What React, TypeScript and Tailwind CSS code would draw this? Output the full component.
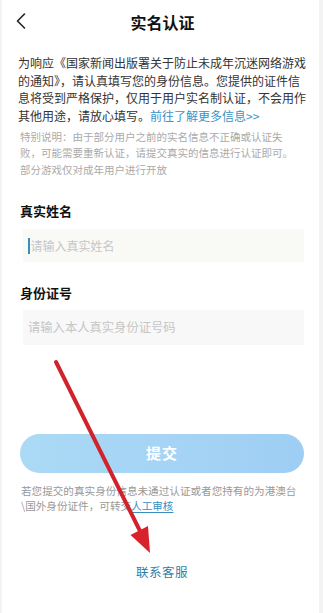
import React from "react";

export default function App() {
  const font = { fontFamily: '"Noto Sans CJK SC", "Noto Sans", sans-serif' };
  return (
    <div className="relative w-[323px] min-h-[613px] bg-[#f3f3f3] pl-[2px] pr-[4px]" style={font}>
      <div className="min-h-[613px] bg-white flex flex-col">
        {/* header */}
        <div className="relative h-[44px] flex items-center justify-center shrink-0">
          <svg className="absolute left-[13px] top-[12px]" width="12" height="18" viewBox="0 0 12 18" fill="none">
            <path d="M9.5 2 L2.5 9 L9.5 16" stroke="#222" strokeWidth="1.6" strokeLinecap="round" strokeLinejoin="round" />
          </svg>
          <div className="text-[16px] font-bold text-[#111] leading-[20px] ml-[4px]">实名认证</div>
        </div>

        {/* intro */}
        <div className="pl-[16px] pr-[10px] pt-[10px] text-[12px] leading-[17.5px] text-[#333]">
          为响应《国家新闻出版署关于防止未成年沉迷网络游戏的通知》，请认真填写您的身份信息。您提供的证件信息将受到严格保护，仅用于用户实名制认证，不会用作其他用途，请放心填写。
          <span className="text-[#3a93c6]">前往了解更多信息&gt;&gt;</span>
        </div>
        <div className="pl-[18px] mt-[4.5px] w-[298px] text-[10.5px] leading-[16.5px] text-[#aaaaaa]">
          特别说明：由于部分用户之前的实名信息不正确或认证失败，可能需要重新认证，请提交真实的信息进行认证即可。部分游戏仅对成年用户进行开放
        </div>

        {/* form */}
        <div className="pl-[18px] pr-[15px] flex flex-col">
          <div className="mt-[24px] text-[13px] font-bold leading-[18px] text-[#111]">真实姓名</div>
          <div className="mt-[9px] ml-[3px] h-[33px] bg-[#f9f9f6] flex items-center pl-[5px]">
            <span className="w-[1.5px] h-[16px] bg-[#3a8fb8] mr-[1px]" />
            <span className="text-[12px] text-[#c6c6c6]">请输入真实姓名</span>
          </div>

          <div className="mt-[22px] text-[13px] font-bold leading-[18px] text-[#111]">身份证号</div>
          <div className="mt-[8px] ml-[3px] h-[35px] bg-[#f8f8f8] flex items-center pl-[5px]">
            <span className="text-[12.3px] text-[#c6c6c6]">请输入本人真实身份证号码</span>
          </div>

          <button className="mt-[89px] h-[39px] rounded-full bg-gradient-to-r from-[#abdaf6] to-[#9fcef4] text-white text-[15px] font-bold tracking-[1px]">
            提交
          </button>

          <div className="mt-[10px] pl-[1px] w-[290px] text-[10.6px] leading-[15px] text-[#999999]">
            若您提交的真实身份信息未通过认证或者您持有的为港澳台\国外身份证件，可转交
            <span className="text-[#3a8fc2] underline underline-offset-2">人工审核</span>
          </div>

          <div className="mt-[50px] text-center text-[12.5px] leading-[18px] text-[#2f7ea8] tracking-[0.5px]">
            联系客服
          </div>
        </div>
      </div>

      {/* annotation arrow */}
      <svg className="absolute left-0 top-0 pointer-events-none" width="323" height="613" viewBox="0 0 323 613">
        <line x1="56" y1="362" x2="140" y2="531" stroke="#d1232b" strokeWidth="4" strokeLinecap="round" />
        <polygon points="150,553 130.5,535 148,526" fill="#d9232b" />
      </svg>
    </div>
  );
}
